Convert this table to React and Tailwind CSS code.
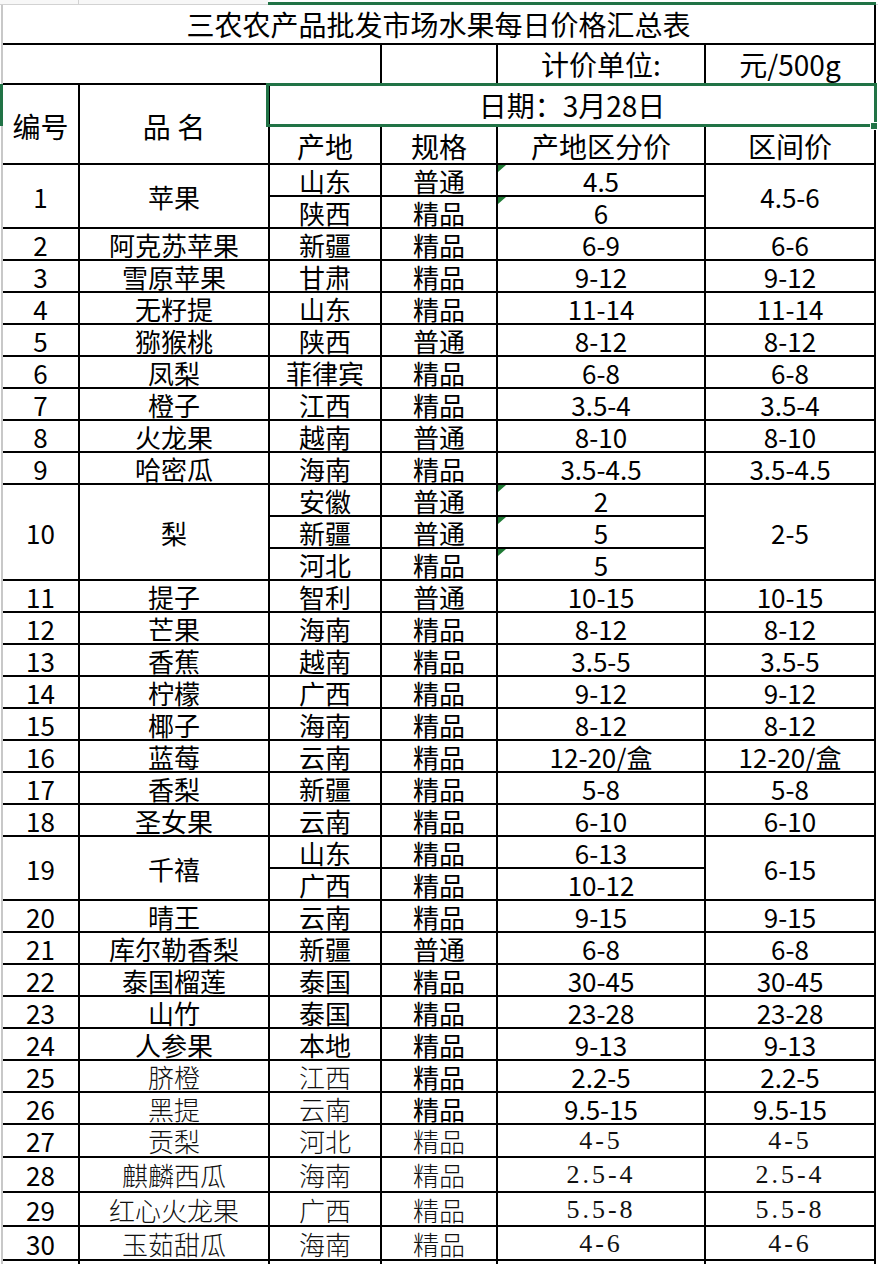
import React from "react";

const ROW_SPAN = { 1: "", 2: "row-span-2", 3: "row-span-3" };

const items = [
  { no: 1, name: "苹果", subs: [["山东", "普通", "4.5"], ["陕西", "精品", "6"]], range: "4.5-6", tri: true },
  { no: 2, name: "阿克苏苹果", subs: [["新疆", "精品", "6-9"]], range: "6-6" },
  { no: 3, name: "雪原苹果", subs: [["甘肃", "精品", "9-12"]], range: "9-12" },
  { no: 4, name: "无籽提", subs: [["山东", "精品", "11-14"]], range: "11-14" },
  { no: 5, name: "猕猴桃", subs: [["陕西", "普通", "8-12"]], range: "8-12" },
  { no: 6, name: "凤梨", subs: [["菲律宾", "精品", "6-8"]], range: "6-8" },
  { no: 7, name: "橙子", subs: [["江西", "精品", "3.5-4"]], range: "3.5-4" },
  { no: 8, name: "火龙果", subs: [["越南", "普通", "8-10"]], range: "8-10" },
  { no: 9, name: "哈密瓜", subs: [["海南", "精品", "3.5-4.5"]], range: "3.5-4.5" },
  { no: 10, name: "梨", subs: [["安徽", "普通", "2"], ["新疆", "普通", "5"], ["河北", "精品", "5"]], range: "2-5", tri: true },
  { no: 11, name: "提子", subs: [["智利", "普通", "10-15"]], range: "10-15" },
  { no: 12, name: "芒果", subs: [["海南", "精品", "8-12"]], range: "8-12" },
  { no: 13, name: "香蕉", subs: [["越南", "精品", "3.5-5"]], range: "3.5-5" },
  { no: 14, name: "柠檬", subs: [["广西", "精品", "9-12"]], range: "9-12" },
  { no: 15, name: "椰子", subs: [["海南", "精品", "8-12"]], range: "8-12" },
  { no: 16, name: "蓝莓", subs: [["云南", "精品", "12-20/盒"]], range: "12-20/盒" },
  { no: 17, name: "香梨", subs: [["新疆", "精品", "5-8"]], range: "5-8" },
  { no: 18, name: "圣女果", subs: [["云南", "精品", "6-10"]], range: "6-10" },
  { no: 19, name: "千禧", subs: [["山东", "精品", "6-13"], ["广西", "精品", "10-12"]], range: "6-15" },
  { no: 20, name: "晴王", subs: [["云南", "精品", "9-15"]], range: "9-15" },
  { no: 21, name: "库尔勒香梨", subs: [["新疆", "普通", "6-8"]], range: "6-8" },
  { no: 22, name: "泰国榴莲", subs: [["泰国", "精品", "30-45"]], range: "30-45" },
  { no: 23, name: "山竹", subs: [["泰国", "精品", "23-28"]], range: "23-28" },
  { no: 24, name: "人参果", subs: [["本地", "精品", "9-13"]], range: "9-13" },
  { no: 25, name: "脐橙", subs: [["江西", "精品", "2.2-5"]], range: "2.2-5", style: "a" },
  { no: 26, name: "黑提", subs: [["云南", "精品", "9.5-15"]], range: "9.5-15", style: "a" },
  { no: 27, name: "贡梨", subs: [["河北", "精品", "4-5"]], range: "4-5", style: "b" },
  { no: 28, name: "麒麟西瓜", subs: [["海南", "精品", "2.5-4"]], range: "2.5-4", style: "b" },
  { no: 29, name: "红心火龙果", subs: [["广西", "精品", "5.5-8"]], range: "5.5-8", style: "b" },
  { no: 30, name: "玉茹甜瓜", subs: [["海南", "精品", "4-6"]], range: "4-6", style: "b" },
];

const base = "bg-white flex items-center justify-center leading-none whitespace-nowrap";

function Cell({ className = "", children }) {
  return <div className={`${base} ${className}`}>{children}</div>;
}

function Tri() {
  return (
    <svg className="absolute left-0 top-0" width="8" height="7" viewBox="0 0 8 7">
      <polygon points="0,0 8,0 0,7" fill="#1f7a35" />
    </svg>
  );
}

function renderItem(it) {
  const span = ROW_SPAN[it.subs.length];
  const light = it.style === "a" || it.style === "b";
  const serif = it.style === "b";
  const nameCls = light ? "font-light text-[#111]" : "text-black";
  const specCls = serif ? "font-light text-[#111]" : "text-black";
  const priceCls = serif
    ? "font-['Liberation_Serif','Noto_Sans_CJK_SC',serif] tracking-[3px] text-[#111]"
    : "text-black";
  const out = [];
  it.subs.forEach((s, i) => {
    if (i === 0) {
      out.push(
        <Cell key={`${it.no}-no`} className={`${span} text-[26px] pt-[1px]`}>{it.no}</Cell>,
        <Cell key={`${it.no}-name`} className={`${span} text-[26px] pt-[1px] ${nameCls}`}>{it.name}</Cell>
      );
    }
    out.push(
      <Cell key={`${it.no}-o${i}`} className={`text-[26px] pt-[1px] ${nameCls}`}>{s[0]}</Cell>,
      <Cell key={`${it.no}-s${i}`} className={`text-[26px] pt-[1px] ${specCls}`}>{s[1]}</Cell>,
      <Cell key={`${it.no}-p${i}`} className={`relative text-[26px] pt-[1px] ${priceCls}`}>
        {it.tri && <Tri />}
        {s[2]}
      </Cell>
    );
    if (i === 0) {
      out.push(
        <Cell key={`${it.no}-r`} className={`${span} text-[26px] pt-[1px] ${priceCls}`}>{it.range}</Cell>
      );
    }
  });
  return out;
}

export default function App() {
  return (
    <div className="w-[878px] h-[1264px] bg-white overflow-hidden font-['Noto_Sans_CJK_SC',sans-serif] text-black">
      {/* top strip (previous sheet row) */}
      <div className="h-[5px] flex items-end">
        <div className="w-[79px] h-full border-r border-b border-[#d2d2d2] bg-[#f7f7f7]" />
        <div className="w-[189px] h-full border-b border-[#d2d2d2] bg-[#f7f7f7]" />
        <div className="w-[608px] h-[3px] bg-[#217346]" />
        <div className="flex-1 h-full border-b border-[#d2d2d2]" />
      </div>
      <div className="flex">
        {/* left gridline */}
        <div className="w-[3px] flex flex-col bg-[#c8c8c8] border-l border-white">
          <div className="h-[79px]" />
          <div className="h-[42px] -ml-[1px] w-[3px] bg-[#217346]" />
        </div>
        <div className="grid grid-cols-[75px_188px_110px_114px_206px_168px] grid-rows-[38px_38px_40px_36px_repeat(30,30px)_31px_33px_32px_32px_20px] gap-[2px] bg-black border-r-2 border-black">
          {/* title */}
          <Cell className="col-span-6 text-[28px]">三农农产品批发市场水果每日价格汇总表</Cell>
          {/* unit row */}
          <Cell className="col-span-3" />
          <Cell />
          <Cell className="text-[28px]">计价单位:</Cell>
          <Cell className="text-[28px]">元/500g</Cell>
          {/* header rows */}
          <Cell className="row-span-2 text-[28px] pt-[4px]">编号</Cell>
          <Cell className="row-span-2 text-[28px] pt-[4px]">品 名</Cell>
          <Cell className="col-span-4 relative text-[28px]">
            日期：3月28日
            <div className="absolute -left-[4px] -top-[2px] -right-[3px] -bottom-[2px] border-[3px] border-[#217346] pointer-events-none" />
            <div className="absolute -right-[4px] -bottom-[5px] w-[8px] h-[8px] bg-[#217346] border border-white" />
          </Cell>
          <Cell className="text-[28px] pt-[1px]">产地</Cell>
          <Cell className="text-[28px] pt-[1px]">规格</Cell>
          <Cell className="text-[28px] pt-[1px]">产地区分价</Cell>
          <Cell className="text-[28px] pt-[1px]">区间价</Cell>
          {items.map(renderItem)}
          <Cell />
          <Cell />
          <Cell />
          <Cell />
          <Cell />
          <Cell />
        </div>
      </div>
    </div>
  );
}
